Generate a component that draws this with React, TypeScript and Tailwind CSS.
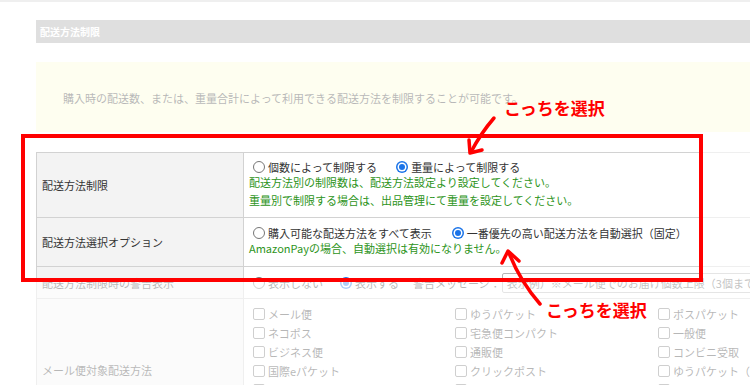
import React from 'react'

const Radio = ({ checked }: { checked?: boolean }) =>
  checked ? (
    <span className="w-[12px] h-[12px] rounded-full bg-[#1a73e8] flex items-center justify-center shrink-0">
      <span className="w-[6px] h-[6px] rounded-full bg-[#1a73e8] shadow-[0_0_0_1.5px_#ffffff]" />
    </span>
  ) : (
    <span className="w-[12px] h-[12px] rounded-full border border-[#767676] bg-white shrink-0" />
  )

const Check = () => <span className="w-[12px] h-[12px] rounded-[2px] border border-[#767676] bg-white shrink-0" />

const RadioItem = ({ label, checked }: { label: string; checked?: boolean }) => (
  <span className="flex items-center gap-[3px]">
    <Radio checked={checked} />
    <span>{label}</span>
  </span>
)

const mailMethods = [
  ['メール便', 'ゆうパケット', 'ポスパケット'],
  ['ネコポス', '宅急便コンパクト', '一般便'],
  ['ビジネス便', '通販便', 'コンビニ受取'],
  ['国際eパケット', 'クリックポスト', 'ゆうパケット（おてがる版）'],
  ['ゆうパケットプラス', 'スマートレター', 'レターパック'],
  ['定形外郵便', '宅配便', 'ネコポス（おてがる配送）'],
  ['その他', '西濃運輸', '佐川急便'],
]

const labelCell = 'w-[207px] shrink-0 bg-[#f3f3f3] border-r border-[#d2d2d2] flex items-center pl-[5px]'

export default function App() {
  return (
    <div className="relative w-[750px] h-[385px] overflow-hidden bg-white text-[11px] leading-[16px] text-[#333] font-['Noto_Sans_CJK_JP','Noto_Sans',sans-serif]">
      <div className="h-[2px] bg-[#d1d1d1]" />

      <div className="w-[780px] pl-[36px] pt-[18px]">
        {/* Section header */}
        <div className="h-[23px] bg-[#a3a3a3] flex items-center pl-[4px] text-[10px] font-bold text-white">
          配送方法制限
        </div>

        {/* Notice */}
        <div className="mt-[19px] h-[70px] bg-[#fcfcd4] flex items-center pl-[27px] pt-[2px]">
          購入時の配送数、または、重量合計によって利用できる配送方法を制限することが可能です。
        </div>

        {/* Settings table */}
        <div className="mt-[20px] border-t border-l border-[#d2d2d2]">
          <div className="flex h-[65px] border-b border-[#d2d2d2]">
            <div className={labelCell}>配送方法制限</div>
            <div className="flex-1 pl-[5px] pt-[6px]">
              <div className="flex items-center h-[16px] ml-[4px] gap-[19px]">
                <RadioItem label="個数によって制限する" />
                <RadioItem label="重量によって制限する" checked />
              </div>
              <div className="h-[15px] leading-[15px] text-[#2d9421]">
                配送方法別の制限数は、配送方法設定より設定してください。
              </div>
              <div className="mt-[3px] h-[15px] leading-[15px] text-[#2d9421]">
                重量別で制限する場合は、出品管理にて重量を設定してください。
              </div>
            </div>
          </div>

          <div className="flex h-[49px] border-b border-[#d2d2d2]">
            <div className={labelCell}>配送方法選択オプション</div>
            <div className="flex-1 pl-[5px] pt-[7px]">
              <div className="flex items-center h-[16px] ml-[4px] gap-[20px]">
                <RadioItem label="購入可能な配送方法をすべて表示" />
                <RadioItem label="一番優先の高い配送方法を自動選択（固定）" checked />
              </div>
              <div className="h-[15px] leading-[15px] text-[#2d9421]">
                AmazonPayの場合、自動選択は有効になりません。
              </div>
            </div>
          </div>

          <div className="flex h-[32px] border-b border-[#d2d2d2]">
            <div className={labelCell}>配送方法制限時の警告表示</div>
            <div className="flex-1 pl-[9px] flex items-center">
              <RadioItem label="表示しない" />
              <span className="ml-[17px]">
                <RadioItem label="表示する" checked />
              </span>
              <span className="ml-[14px]">警告メッセージ：</span>
              <div className="ml-[1px] flex-1 h-[20px] border border-[#b5b5b5] rounded-[2px] flex items-center pl-[4px] whitespace-nowrap overflow-hidden text-[#555]">
                表示例）※メール便でのお届け個数上限（3個まで）
              </div>
            </div>
          </div>

          <div className="flex border-b border-[#d2d2d2]">
            <div className={labelCell}>メール便対象配送方法</div>
            <div className="flex-1 pl-[9px] pt-[5px] pb-[3px]">
              {mailMethods.map((row, i) => (
                <div key={i} className="grid grid-cols-[202px_203px_1fr] h-[19px]">
                  {row.map((name) => (
                    <span key={name} className="flex items-center gap-[3px] whitespace-nowrap">
                      <Check />
                      <span>{name}</span>
                    </span>
                  ))}
                </div>
              ))}
            </div>
          </div>
        </div>
      </div>

      {/* Highlight frame, fades everything around it */}
      <div className="absolute left-[21px] top-[134px] w-[682px] h-[148px] border-4 border-[#ff0000] shadow-[0_0_0_1200px_rgba(255,255,255,0.65)] z-10" />

      {/* Callouts */}
      <svg className="absolute inset-0 z-20 pointer-events-none" width="750" height="385" viewBox="0 0 750 385">
        <g fill="none" stroke="#ff0000" strokeWidth="3.5" strokeLinecap="round" strokeLinejoin="round">
          <path d="M494 118 Q481 133 471 152" />
          <path d="M469 140 L470 153 L482 150" />
          <path d="M540 304 Q520 281 509 253" />
          <path d="M502 263 L508 251 L519 261" />
        </g>
      </svg>
      <div className="absolute left-[504px] top-[97px] z-20 text-[17px] leading-[22px] font-bold text-[#ff0000]">
        こっちを選択
      </div>
      <div className="absolute left-[546px] top-[299px] z-20 text-[17px] leading-[22px] font-bold text-[#ff0000]">
        こっちを選択
      </div>
    </div>
  )
}
